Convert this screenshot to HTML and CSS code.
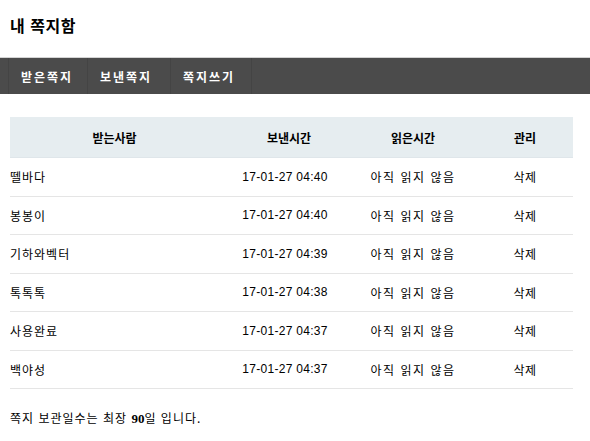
FILE: index.html
```html
<!DOCTYPE html>
<html lang="ko">
<head>
<meta charset="utf-8">
<title>내 쪽지함</title>
<link rel="stylesheet" href="styles.css">
</head>
<body>
<h1 class="title">내 쪽지함</h1>
<nav class="tabs">
  <a class="tab">받은쪽지</a>
  <a class="tab">보낸쪽지</a>
  <a class="tab">쪽지쓰기</a>
</nav>
<table class="memo">
  <thead>
    <tr><th class="c-name">받는사람</th><th class="c-sent">보낸시간</th><th class="c-read">읽은시간</th><th class="c-mng">관리</th></tr>
  </thead>
  <tbody>
    <tr><td class="c-name">뗄바다</td><td class="c-sent">17-01-27 04:40</td><td class="c-read">아직 읽지 않음</td><td class="c-mng">삭제</td></tr>
    <tr><td class="c-name">봉봉이</td><td class="c-sent">17-01-27 04:40</td><td class="c-read">아직 읽지 않음</td><td class="c-mng">삭제</td></tr>
    <tr><td class="c-name">기하와벡터</td><td class="c-sent">17-01-27 04:39</td><td class="c-read">아직 읽지 않음</td><td class="c-mng">삭제</td></tr>
    <tr><td class="c-name">톡톡톡</td><td class="c-sent">17-01-27 04:38</td><td class="c-read">아직 읽지 않음</td><td class="c-mng">삭제</td></tr>
    <tr><td class="c-name">사용완료</td><td class="c-sent">17-01-27 04:37</td><td class="c-read">아직 읽지 않음</td><td class="c-mng">삭제</td></tr>
    <tr><td class="c-name">백야성</td><td class="c-sent">17-01-27 04:37</td><td class="c-read">아직 읽지 않음</td><td class="c-mng">삭제</td></tr>
  </tbody>
</table>
<p class="note">쪽지 보관일수는 최장 <b class="num">90</b>일 입니다.</p>
</body>
</html>
```
FILE: styles.css
```css
html, body {
  margin: 0;
  padding: 0;
  background: #fff;
}
body {
  font-family: "Noto Sans CJK KR", "Noto Sans", sans-serif;
  font-size: 12px;
  color: #000;
}
.title {
  margin: 0;
  padding: 14px 0 0 10px;
  height: 57px;
  box-sizing: border-box;
  font-size: 16px;
  font-weight: bold;
  line-height: 22px;
  letter-spacing: 0.5px;
}
.tabs {
  display: flex;
  height: 37px;
  box-sizing: border-box;
  background: #4b4b4b;
  border-top: 1px solid #d4d4d4;
  padding-left: 8px;
}
.tab {
  display: flex;
  align-items: center;
  flex-shrink: 0;
  box-sizing: border-box;
  padding: 0 0 0 12px;
  border-left: 1px solid #444;
  color: #fff;
  font-weight: bold;
  font-size: 12px;
  letter-spacing: 2px;
  white-space: nowrap;
}
.tab:nth-child(1) { width: 79px; }
.tab:nth-child(2) { width: 83px; }
.tab:nth-child(3) { width: 82px; border-right: 1px solid #444; }
.memo {
  margin: 23px 0 0 10px;
  width: 563px;
  border-collapse: collapse;
  table-layout: fixed;
}
.memo th {
  height: 40px;
  background: #e6edf0;
  font-weight: bold;
  font-size: 12px;
  text-align: center;
  padding: 0;
  border-bottom: 1px solid #dfe6ea;
}
.memo td {
  height: 37.5px;
  padding: 0;
  border-bottom: 1px solid #e5e5e5;
  text-align: center;
  letter-spacing: 0.5px;
}
.memo .c-name { width: 209px; }
.memo td.c-name { text-align: left; letter-spacing: 1px; }
.memo .c-sent { width: 140px; }
.memo td.c-sent { padding-right: 8px; font-family: "Liberation Sans", sans-serif; letter-spacing: 0.3px; }
.memo .c-read { width: 108px; }
.memo td.c-read { letter-spacing: 1.5px; }
.memo .c-mng { padding-left: 10px; }
.note {
  margin: 20px 0 0 10px;
  font-size: 12px;
  letter-spacing: 1px;
}
.num {
  font-family: "Liberation Serif", serif;
  font-size: 13px;
  letter-spacing: 0;
}
```
